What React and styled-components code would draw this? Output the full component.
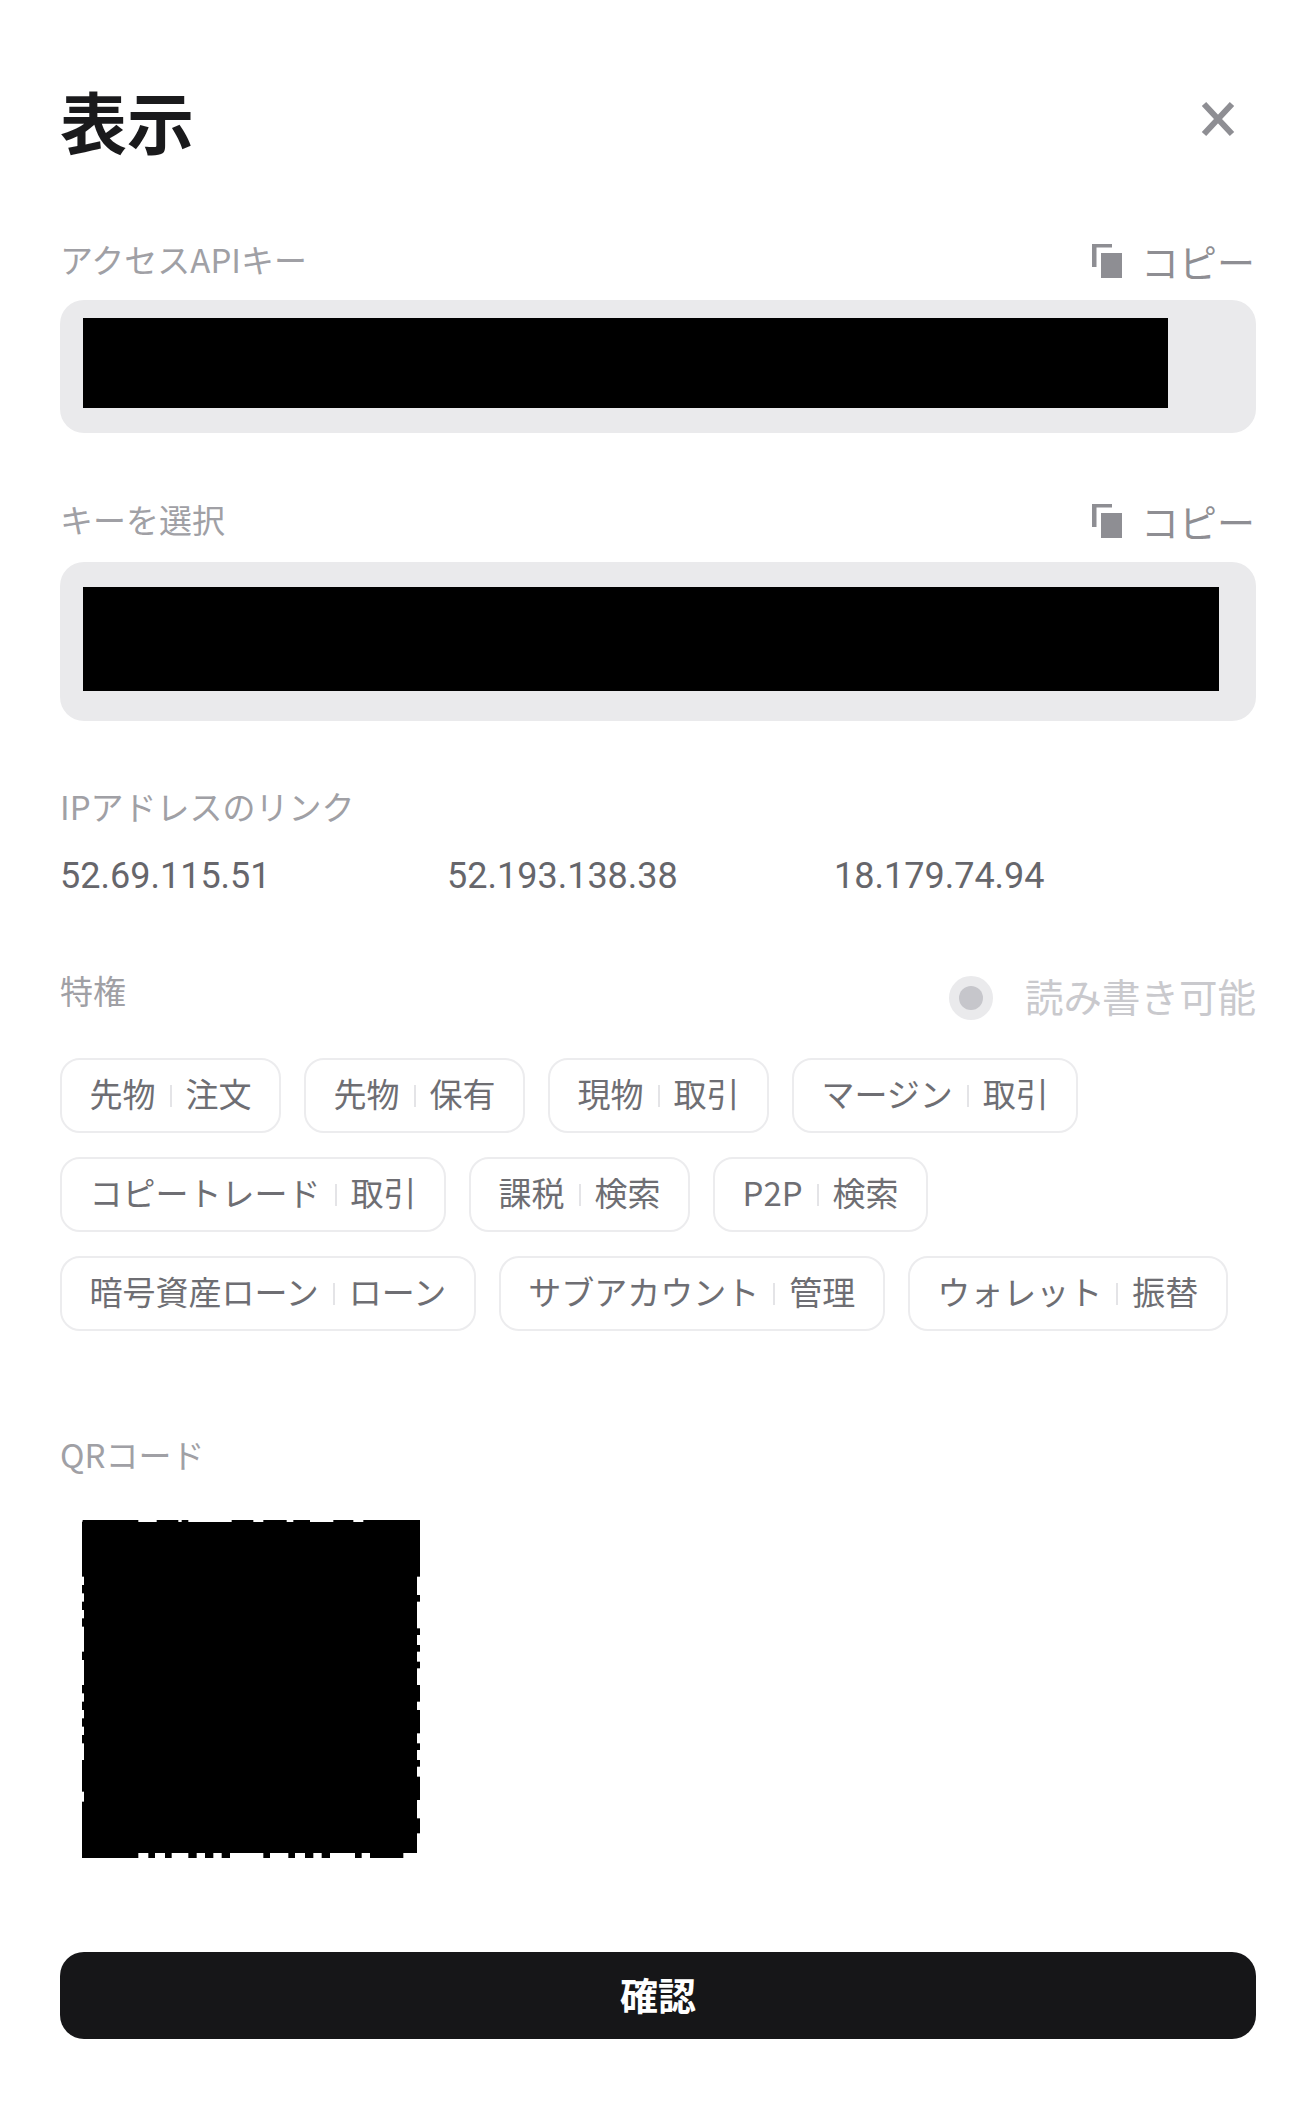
import React from 'react';
import styled, { createGlobalStyle } from 'styled-components';

const GlobalStyle = createGlobalStyle`
  body {
    margin: 0;
    background: #fff;
    font-family: "Noto Sans CJK JP", "Noto Sans", sans-serif;
  }
`;

const Page = styled.div`
  width: 1314px;
  height: 2117px;
  box-sizing: border-box;
  padding: 82px 58px 0 60px;
  display: flex;
  flex-direction: column;
  overflow: hidden;
`;

const Header = styled.header`
  display: flex;
  justify-content: space-between;
  height: 84px;
`;

const Title = styled.h1`
  margin: 0;
  font-size: 67px;
  line-height: 76px;
  font-weight: 700;
  color: #1a1a1c;
`;

const CloseButton = styled.svg`
  width: 34px;
  height: 36px;
  margin: 19px 21px 0 0;
`;

const LabelRow = styled.div`
  display: flex;
  justify-content: space-between;
  align-items: center;
  height: 40px;
  margin-top: ${props => props.$top}px;
`;

const Label = styled.div`
  font-size: 33px;
  line-height: 36px;
  color: #a0a0a5;
  margin-top: ${props => props.$top || 0}px;
  padding-bottom: 4px;
`;

const CopyLink = styled.div`
  display: flex;
  align-items: center;
  gap: 19px;
  font-size: 38px;
  line-height: 40px;
  color: #8e8e93;
  margin-right: 1px;
`;

const KeyField = styled.div`
  box-sizing: border-box;
  height: ${props => props.$height}px;
  margin-top: ${props => props.$top}px;
  padding: ${props => props.$pad}px 0 0 23px;
  background: #eaeaec;
  border-radius: 24px;
`;

const Redacted = styled.div`
  width: ${props => props.$width}px;
  height: ${props => props.$height}px;
  background: #000;
`;

const IpRow = styled.div`
  display: grid;
  grid-template-columns: repeat(3, 387px);
  margin-top: 26px;
`;

const Ip = styled.div`
  font-family: Roboto, sans-serif;
  font-size: 36px;
  line-height: 44px;
  color: #66666b;
`;

const PermissionRow = styled.div`
  display: flex;
  justify-content: space-between;
  align-items: flex-start;
  height: 44px;
  margin-top: 78px;
`;

const ReadWrite = styled.div`
  display: flex;
  align-items: center;
  gap: 32px;
`;

const ReadWriteText = styled.span`
  font-size: 38.500px;
  line-height: 44px;
  color: #c9c9cd;
  margin-top: -6px;
`;

const Radio = styled.span`
  box-sizing: border-box;
  width: 44px;
  height: 44px;
  border-radius: 50%;
  background: #eaeaec;
  border: 10px solid #eaeaec;
  display: flex;

  &::after {
    content: '';
    flex: 1;
    border-radius: 50%;
    background: #c6c6cb;
  }
`;

const ChipList = styled.div`
  display: flex;
  flex-wrap: wrap;
  gap: 24px 23px;
  margin-top: 38px;
`;

const Chip = styled.div`
  box-sizing: border-box;
  display: flex;
  align-items: center;
  height: 75px;
  padding: 0 27.500px 6px;
  border: 2px solid #ececee;
  border-radius: 20px;
  font-size: 33px;
  color: #6e6e73;
  white-space: nowrap;
`;

const ChipDivider = styled.span`
  width: 2px;
  height: 22px;
  margin: 6px 14px 0;
  background: #e4e4e7;
`;

const QrFrame = styled.svg`
  display: block;
  width: 338px;
  height: 338px;
  margin: 44px 0 0 22px;
`;

const ConfirmButton = styled.button`
  height: 87px;
  margin-top: 94px;
  padding: 0 0 5px;
  border: 0;
  border-radius: 24px;
  background: #161618;
  color: #fff;
  font-family: inherit;
  font-size: 38px;
  font-weight: 700;
`;

const chips = [
  ['先物', '注文'],
  ['先物', '保有'],
  ['現物', '取引'],
  ['マージン', '取引'],
  ['コピートレード', '取引'],
  ['課税', '検索'],
  ['P2P', '検索'],
  ['暗号資産ローン', 'ローン'],
  ['サブアカウント', '管理'],
  ['ウォレット', '振替'],
];

// module edges that stick out of the redaction box, in 3x zoom coordinates
const qrTop = [[248, 415], [470, 535], [545, 565], [695, 760], [790, 860], [880, 930], [1000, 1060], [1090, 1260]];
const qrBottom = [[245, 415], [445, 465], [495, 515], [565, 590], [615, 640], [665, 690], [790, 810], [865, 885], [915, 940], [965, 990], [1065, 1085], [1110, 1210]];
const qrLeft = [[365, 530], [555, 580], [605, 630], [655, 680], [755, 780], [855, 880], [905, 930], [955, 980], [1005, 1030], [1080, 1175], [1205, 1375]];
const qrRight = [[365, 530], [585, 605], [685, 705], [735, 755], [785, 805], [855, 905], [930, 1000], [1030, 1050], [1080, 1100], [1130, 1200], [1255, 1300]];

const toX = v => (v - 246) / 3;
const toY = v => (v - 360) / 3;

const CopyIcon = () => (
  <svg width="30" height="34" viewBox="0 0 30 34" fill="#8e8e93">
    <path d="M0 0h20v3.500H4.500V23H0z" />
    <rect x="9" y="9" width="21" height="25" />
  </svg>
);

const QrCode = () => (
  <QrFrame viewBox="0 0 338 338">
    <rect x="2" y="2" width="333" height="331" fill="#000" />
    {qrTop.map(([a, b]) => (
      <rect key={`t${a}`} x={toX(a)} y="0" width={(b - a) / 3} height="3" fill="#000" />
    ))}
    {qrBottom.map(([a, b]) => (
      <rect key={`b${a}`} x={toX(a)} y="332" width={(b - a) / 3} height="6" fill="#000" />
    ))}
    {qrLeft.map(([a, b]) => (
      <rect key={`l${a}`} x="0" y={toY(a)} width="3" height={(b - a) / 3} fill="#000" />
    ))}
    {qrRight.map(([a, b]) => (
      <rect key={`r${a}`} x="334" y={toY(a)} width="4" height={(b - a) / 3} fill="#000" />
    ))}
  </QrFrame>
);

const App = () => (
  <Page>
    <GlobalStyle />
    <Header>
      <Title>表示</Title>
      <CloseButton viewBox="0 0 34 36" fill="none" stroke="#8e8e93" strokeWidth="6">
        <path d="M3 3l28 30M31 3L3 33" />
      </CloseButton>
    </Header>

    <LabelRow $top={75}>
      <Label>アクセスAPIキー</Label>
      <CopyLink><CopyIcon />コピー</CopyLink>
    </LabelRow>
    <KeyField $height={133} $top={19} $pad={18}>
      <Redacted $width={1085} $height={90} />
    </KeyField>

    <LabelRow $top={68}>
      <Label>キーを選択</Label>
      <CopyLink><CopyIcon />コピー</CopyLink>
    </LabelRow>
    <KeyField $height={159} $top={21} $pad={25}>
      <Redacted $width={1136} $height={104} />
    </KeyField>

    <LabelRow $top={67}>
      <Label>IPアドレスのリンク</Label>
    </LabelRow>
    <IpRow>
      <Ip>52.69.115.51</Ip>
      <Ip>52.193.138.38</Ip>
      <Ip>18.179.74.94</Ip>
    </IpRow>

    <PermissionRow>
      <Label $top={-4}>特権</Label>
      <ReadWrite><Radio /><ReadWriteText>読み書き可能</ReadWriteText></ReadWrite>
    </PermissionRow>
    <ChipList>
      {chips.map(([group, action]) => (
        <Chip key={group + action}>
          {group}
          <ChipDivider />
          {action}
        </Chip>
      ))}
    </ChipList>

    <LabelRow $top={105}>
      <Label>QRコード</Label>
    </LabelRow>
    <QrCode />

    <ConfirmButton>確認</ConfirmButton>
  </Page>
);

export default App;
